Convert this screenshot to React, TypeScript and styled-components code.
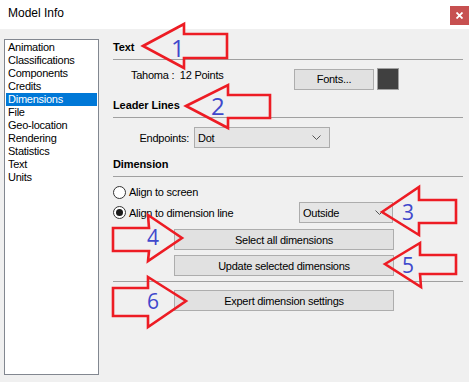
import React from "react";
import styled, { createGlobalStyle } from "styled-components";

const GlobalStyle = createGlobalStyle`
  html, body {
    margin: 0;
    padding: 0;
    background: #f0f0f0;
  }
  body {
    font-family: "Liberation Sans", Arial, sans-serif;
    font-size: 11px;
    letter-spacing: -0.25px;
    color: #000;
  }
`;

const Window = styled.div`
  position: relative;
  width: 469px;
  height: 382px;
  background: #f0f0f0;
  overflow: hidden;
`;

const TitleBar = styled.div`
  display: flex;
  align-items: flex-start;
  height: 29px;
  background: #fff;
`;

const Title = styled.div`
  font-size: 12px;
  line-height: 16px;
  letter-spacing: 0;
  padding: 5px 0 0 8px;
`;

const CloseButton = styled.div`
  display: flex;
  align-items: center;
  justify-content: center;
  margin: 6px 0 0 auto;
  width: 19px;
  height: 19px;
  background: #c75050;
`;

const Body = styled.div`
  display: flex;
  align-items: flex-start;
  padding: 10px 6px 0 4px;
`;

const Sidebar = styled.div`
  box-sizing: border-box;
  width: 95px;
  height: 336px;
  padding: 1px;
  background: #fff;
  border: 1px solid #828790;
`;

const ListItem = styled.div<{ selected?: boolean }>`
  height: 13px;
  line-height: 13px;
  padding-left: 2px;
  white-space: nowrap;
  background: ${({ selected }) => (selected ? "#0078d7" : "transparent")};
  color: ${({ selected }) => (selected ? "#fff" : "#000")};
`;

const Panel = styled.div`
  margin-left: 14px;
  width: 350px;
  padding-top: 1px;
`;

const Heading = styled.div<{ top?: number }>`
  margin-top: ${({ top }) => top || 0}px;
  font-weight: bold;
  letter-spacing: -0.1px;
  line-height: 14px;
  padding-bottom: 5px;
  border-bottom: 1px solid #a0a0a0;
`;

const Row = styled.div<{ top: number; height: number }>`
  display: flex;
  align-items: center;
  margin-top: ${({ top }) => top}px;
  height: ${({ height }) => height}px;
`;

const FontLabel = styled.div`
  align-self: flex-start;
  width: 163px;
  margin-left: 18px;
  padding-top: 1px;
  line-height: 13px;
`;

const Button = styled.div<{ width: number; indent?: number }>`
  box-sizing: border-box;
  display: flex;
  align-items: center;
  justify-content: center;
  width: ${({ width }) => width}px;
  height: 21px;
  margin-left: ${({ indent }) => indent || 0}px;
  background: #e1e1e1;
  border: 1px solid #adadad;
`;

const Swatch = styled.div`
  box-sizing: border-box;
  width: 22px;
  height: 22px;
  margin-left: 3px;
  background: #404040;
  border: 1px solid #a0a0a0;
`;

const FieldLabel = styled.div`
  width: 76px;
  text-align: right;
  margin-right: 5px;
`;

const Combo = styled.div<{ width: number }>`
  box-sizing: border-box;
  display: flex;
  align-items: center;
  width: ${({ width }) => width}px;
  height: 21px;
  padding: 0 8px 0 3px;
  background: #e5e5e5;
  border: 1px solid #acacac;
`;

const ComboText = styled.span`
  flex: 1;
`;

const Radio = styled.div<{ checked?: boolean }>`
  box-sizing: border-box;
  display: flex;
  align-items: center;
  justify-content: center;
  width: 13px;
  height: 13px;
  border-radius: 50%;
  border: 1px solid #333;
  background: #fff;
  &::after {
    content: "";
    display: ${({ checked }) => (checked ? "block" : "none")};
    width: 7px;
    height: 7px;
    border-radius: 50%;
    background: #1a1a1a;
  }
`;

const RadioLabel = styled.div<{ width?: number }>`
  margin-left: 3px;
  width: ${({ width }) => (width ? `${width}px` : "auto")};
`;

const Separator = styled.div`
  margin-top: 5px;
  height: 0;
  border-top: 1px solid #a0a0a0;
`;

const Overlay = styled.svg`
  position: absolute;
  left: 0;
  top: 0;
  pointer-events: none;
`;

const Chevron = () => (
  <svg width="9" height="5" viewBox="0 0 9 5">
    <path d="M0.5 0.5 L4.5 4.5 L8.5 0.5" fill="none" stroke="#555" strokeWidth="1" />
  </svg>
);

const items = [
  "Animation",
  "Classifications",
  "Components",
  "Credits",
  "Dimensions",
  "File",
  "Geo-location",
  "Rendering",
  "Statistics",
  "Text",
  "Units",
];

const arrows = [
  "143,46 184,24 184,34 227,34 227,58 184,58 184,68",
  "186,106 228,85 228,95 270,95 270,118 228,118 228,128",
  "382,212 419,187 419,200 456,200 456,223 419,223 419,235",
  "385,264 420,243 420,255 456,255 456,274 420,274 421,287",
  "113,228 149,228 148,215 182,238 148,261 149,251 113,251",
  "113,288 148,288 148,277 186,301 148,327 148,316 113,316",
];

const numbers = [
  { n: "1", x: 171, y: 57, size: 24 },
  { n: "2", x: 211, y: 115, size: 24 },
  { n: "3", x: 402, y: 220, size: 21 },
  { n: "4", x: 147, y: 245, size: 21 },
  { n: "5", x: 402, y: 273, size: 21 },
  { n: "6", x: 147, y: 309, size: 21 },
];

export default function App() {
  return (
    <Window>
      <GlobalStyle />
      <TitleBar>
        <Title>Model Info</Title>
        <CloseButton>
          <svg width="7" height="7" viewBox="0 0 7 7">
            <path d="M0.5 0.5 L6.5 6.5 M6.5 0.5 L0.5 6.5" stroke="#fff" strokeWidth="1.8" />
          </svg>
        </CloseButton>
      </TitleBar>
      <Body>
        <Sidebar>
          {items.map((item) => (
            <ListItem key={item} selected={item === "Dimensions"}>
              {item}
            </ListItem>
          ))}
        </Sidebar>
        <Panel>
          <Heading>Text</Heading>
          <Row top={8} height={22}>
            <FontLabel>Tahoma :&nbsp; 12 Points</FontLabel>
            <Button width={80}>Fonts...</Button>
            <Swatch />
          </Row>

          <Heading top={8}>Leader Lines</Heading>
          <Row top={9} height={21}>
            <FieldLabel>Endpoints:</FieldLabel>
            <Combo width={136}>
              <ComboText>Dot</ComboText>
              <Chevron />
            </Combo>
          </Row>

          <Heading top={9}>Dimension</Heading>
          <Row top={7} height={16}>
            <Radio />
            <RadioLabel>Align to screen</RadioLabel>
          </Row>
          <Row top={2} height={21}>
            <Radio checked />
            <RadioLabel width={170}>Align to dimension line</RadioLabel>
            <Combo width={94}>
              <ComboText>Outside</ComboText>
              <Chevron />
            </Combo>
          </Row>
          <Row top={6} height={21}>
            <Button width={220} indent={61}>Select all dimensions</Button>
          </Row>
          <Row top={5} height={21}>
            <Button width={220} indent={61}>Update selected dimensions</Button>
          </Row>
          <Separator />
          <Row top={8} height={21}>
            <Button width={220} indent={61}>Expert dimension settings</Button>
          </Row>
        </Panel>
      </Body>

      <Overlay width="469" height="382" viewBox="0 0 469 382">
        {arrows.map((points, i) => (
          <polygon
            key={i}
            points={points}
            fill="none"
            stroke="#ed1c24"
            strokeWidth="2.6"
            strokeLinejoin="miter"
          />
        ))}
        {numbers.map(({ n, x, y, size }) => (
          <text
            key={n}
            x={x}
            y={y}
            fill="#3f48cc"
            fontSize={size}
            fontFamily='"Open Sans", "Noto Sans", sans-serif'
            letterSpacing="0"
          >
            {n}
          </text>
        ))}
      </Overlay>
    </Window>
  );
}
